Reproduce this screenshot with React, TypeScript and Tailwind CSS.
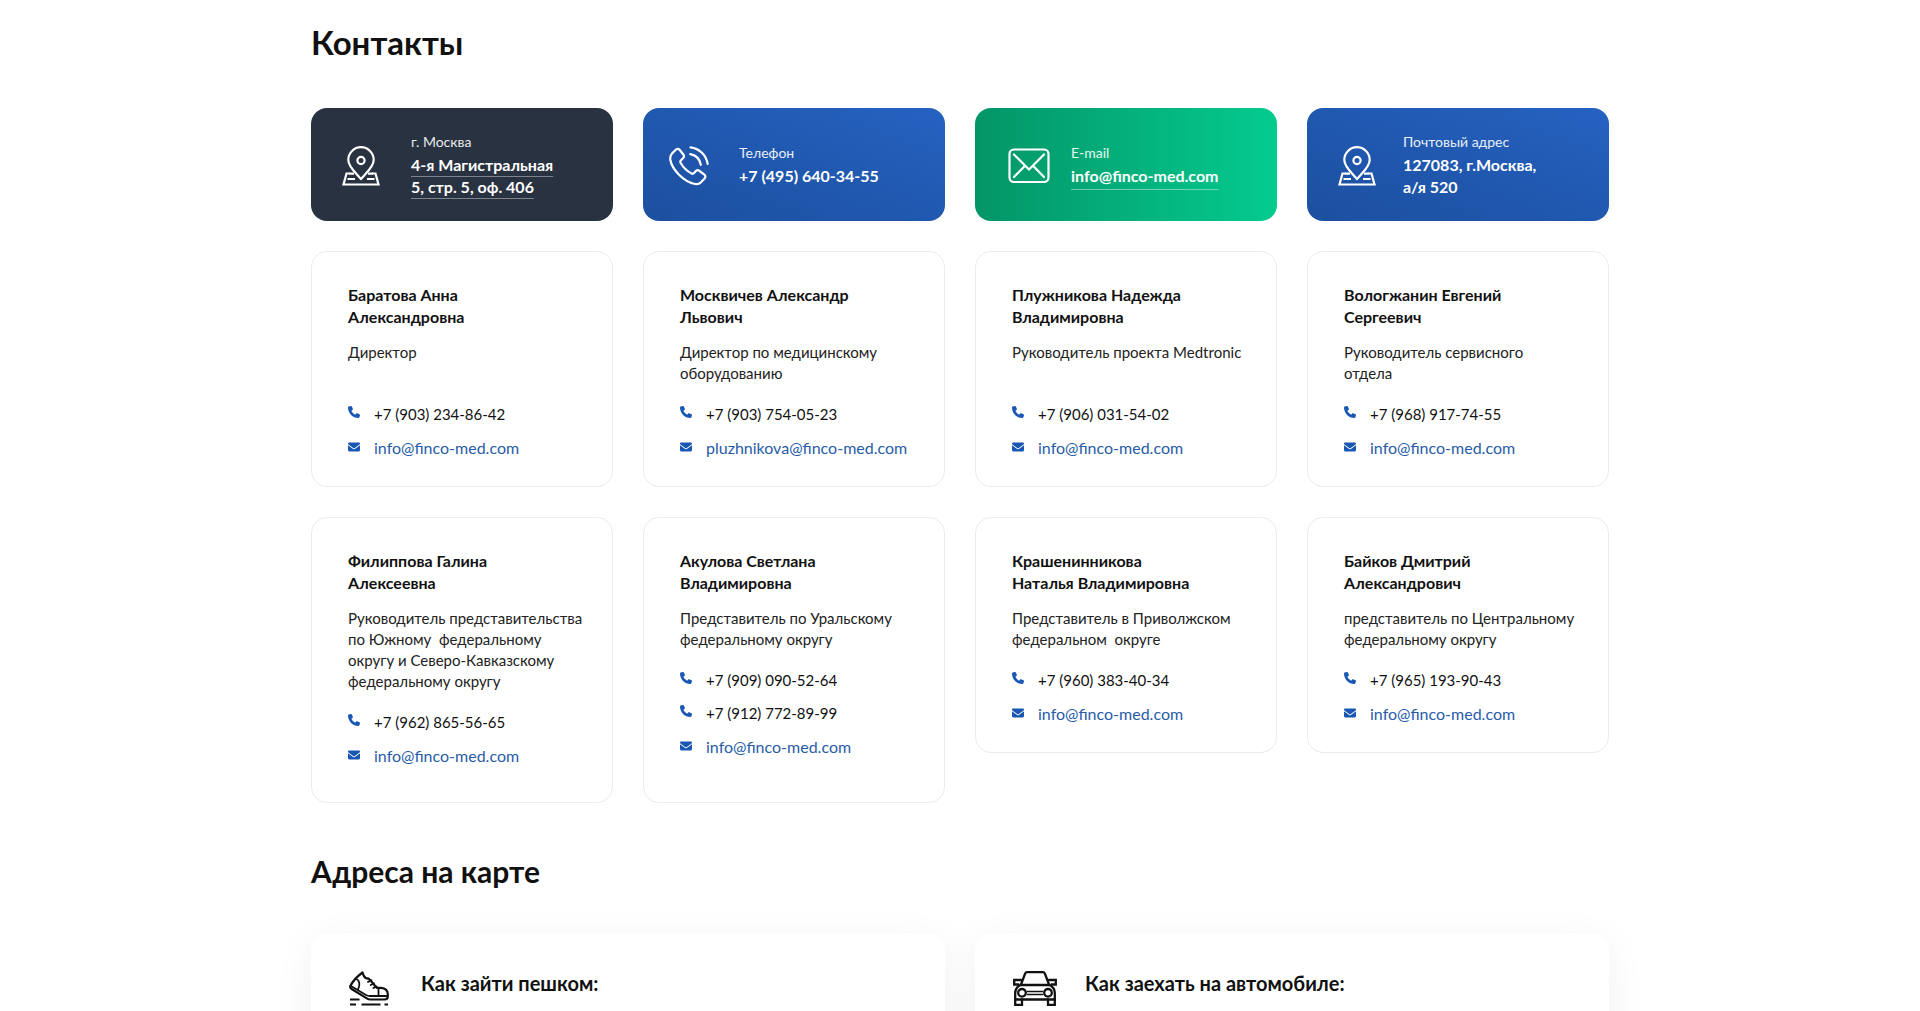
import React from "react";
import { FaPhone, FaEnvelope } from "react-icons/fa6";

type Person = {
  name: string;
  role: string;
  phones: string[];
  email: string;
  featured?: boolean;
};

const people: Person[] = [
  { name: "Баратова Анна\nАлександровна", role: "Директор", phones: ["+7 (903) 234-86-42"], email: "info@finco-med.com" },
  { name: "Москвичев Александр\nЛьвович", role: "Директор по медицинскому\nоборудованию", phones: ["+7 (903) 754-05-23"], email: "pluzhnikova@finco-med.com" },
  { name: "Плужникова Надежда\nВладимировна", role: "Руководитель проекта Medtronic", phones: ["+7 (906) 031-54-02"], email: "info@finco-med.com" },
  { name: "Вологжанин Евгений\nСергеевич", role: "Руководитель сервисного\nотдела", phones: ["+7 (968) 917-74-55"], email: "info@finco-med.com" },
  { name: "Филиппова Галина\nАлексеевна", role: "Руководитель представительства\nпо Южному  федеральному\nокругу и Северо-Кавказскому\nфедеральному округу", phones: ["+7 (962) 865-56-65"], email: "info@finco-med.com", featured: true },
  { name: "Акулова Светлана\nВладимировна", role: "Представитель по Уральскому\nфедеральному округу", phones: ["+7 (909) 090-52-64", "+7 (912) 772-89-99"], email: "info@finco-med.com", featured: true },
  { name: "Крашенинникова\nНаталья Владимировна", role: "Представитель в Приволжском\nфедеральном  округе", phones: ["+7 (960) 383-40-34"], email: "info@finco-med.com" },
  { name: "Байков Дмитрий\nАлександрович", role: "представитель по Центральному\nфедеральному округу", phones: ["+7 (965) 193-90-43"], email: "info@finco-med.com" },
];

const stroke = {
  fill: "none",
  stroke: "currentColor",
  strokeLinecap: "round" as const,
  strokeLinejoin: "round" as const,
};

function PinIcon() {
  return (
    <svg width="38" height="40" viewBox="0 0 38 40" {...stroke} strokeWidth="2.2" aria-hidden="true">
      <path d="M19 33.2C14.2 27 6.3 20.8 6.3 13.9a12.7 12.7 0 0 1 25.4 0C31.7 20.8 23.8 27 19 33.2Z" />
      <circle cx="19" cy="14.5" r="3.600" />
      <path d="M7.500 27.500H4.500L1.500 38.500H36.500L33.500 27.500H30.500" strokeLinejoin="miter" />
      <path d="M5.500 33H13M25 33H32.500M7 27.700H12M26 27.700H31" strokeLinecap="butt" />
    </svg>
  );
}

function CallIcon() {
  return (
    <svg width="40" height="40" viewBox="0 0 40 40" {...stroke} strokeWidth="2.2" aria-hidden="true">
      <path d="M3.200 7.200 6.800 3.700C8 2.600 9.500 2.600 10.600 3.800L14.300 8.500C15.300 9.800 15.200 11.200 14 12.300L12 14.200C11.200 15 11.100 15.900 11.700 17C14 21 18.300 25.200 22.400 27.400C23.400 28 24.300 27.800 25.100 27L26.800 25.100C27.900 24 29.300 24 30.500 25L35.400 28.700C36.700 29.700 36.700 31.200 35.600 32.400L32 36.200C30.500 37.800 28.500 38.400 26 38C14.800 35.800 2.800 23.500 1.300 13.500C1 11 1.600 8.800 3.200 7.200Z" />
      <path d="M21.500 1.300C30.500 2.300 37.300 9.300 38.700 18M21.200 8.200C26.800 9.200 30.800 13.300 31.800 18.800" />
    </svg>
  );
}

function MailIcon() {
  return (
    <svg width="42" height="36" viewBox="0 0 42 36" {...stroke} strokeWidth="2.2" aria-hidden="true">
      <rect x="1.500" y="1.500" width="39" height="32.500" rx="4.500" />
      <path d="M6 6.500 21 21.500 36 6.500M6 29 17 17.800M36 29 25 17.800" />
    </svg>
  );
}

function ShoeIcon() {
  return (
    <svg width="40" height="36" viewBox="0 0 40 36" {...stroke} strokeWidth="2.2" aria-hidden="true">
      <path d="M1.500 14.800C4 9.500 8.500 5.200 13.500 1.500L14.500 4.200C15.500 6.500 17.300 7.800 19.800 7.600L27.700 16.800H32C36 17.200 38.800 19.500 38.800 23.200V25.500C38.800 27.500 37.500 28.500 35.500 28.500H21.500C20 28.500 19 28.200 17.800 27.400L3 18.200C1.300 17.200.8 16.200 1.500 14.800Z" />
      <path d="M1.500 14.800 17 24C18.500 24.800 19.500 25 21 25H38.500M29.500 17V25M19 10.800 22.500 9.300M21.700 14 25 12.300M24.300 17 27.700 15.500M7 8C10.500 9 11.500 14 9 18.500" strokeWidth="1.800" />
      <path d="M1 28.500H10.500M1 33.500H7M12.500 33.500H31.500M35.500 33.500H39" strokeLinecap="butt" />
    </svg>
  );
}

function CarIcon() {
  return (
    <svg width="44" height="35" viewBox="0 0 44 35" {...stroke} strokeWidth="2.3" strokeLinejoin="miter" aria-hidden="true">
      <path d="M8 13.500 12 2.800C12.400 1.700 13 1.200 14.200 1.200H29.800C31 1.200 31.600 1.700 32 2.800L36 13.500" />
      <path d="M7.500 14H36.500C39.500 15.500 41.800 18.500 41.800 22V28.500H2.200V22C2.200 18.500 4.500 15.500 7.500 14Z" />
      <path d="M8 9H1.200V13.500H5.500M36 9H42.800V13.500H38.500" />
      <path d="M2.200 28.500V33.800H9V28.500M35 28.500V33.800H41.800V28.500" />
      <circle cx="9" cy="21.800" r="3.800" />
      <circle cx="35" cy="21.800" r="3.800" />
      <path d="M14.500 20.500H29.500M14.500 23.500H29.500" strokeWidth="1.700" />
    </svg>
  );
}

type TileProps = {
  icon: React.ReactNode;
  label: string;
  className: string;
  children: React.ReactNode;
};

function Tile({ icon, label, className, children }: TileProps) {
  return (
    <div className={`flex h-[113px] items-center rounded-2xl text-white ${className}`}>
      <div className="flex w-11 shrink-0 justify-center pt-0.5">{icon}</div>
      <div>
        <p className="text-sm leading-5 text-white/90">{label}</p>
        <div className="mt-0.5 font-bold leading-[22px] whitespace-nowrap">{children}</div>
      </div>
    </div>
  );
}

function PersonCard({ person }: { person: Person }) {
  return (
    <article
      className={`rounded-2xl border border-[#e9ebee] px-9 pt-8 pb-7 ${person.featured ? "min-h-[286px]" : ""}`}
    >
      <h3 className="font-bold leading-[22px] whitespace-pre">{person.name}</h3>
      <p className="mt-3.5 min-h-[42px] text-[15px] leading-[21px] whitespace-pre text-[#222]">{person.role}</p>
      <ul className="mt-5 space-y-3 text-[15px] leading-[21px]">
        {person.phones.map((phone) => (
          <li key={phone} className="flex gap-3.5">
            <FaPhone className="mt-0.5 size-3 text-[#1a56b4]" aria-hidden="true" />
            <span>{phone}</span>
          </li>
        ))}
        <li className="flex gap-3.5">
          <FaEnvelope className="mt-1 size-3 text-[#1a56b4]" aria-hidden="true" />
          <a href={`mailto:${person.email}`} className="text-base leading-[21px] text-[#285ca9]">
            {person.email}
          </a>
        </li>
      </ul>
    </article>
  );
}

function RouteCard({ icon, title }: { icon: React.ReactNode; title: string }) {
  return (
    <article className="flex gap-7 rounded-2xl bg-white px-[38px] pt-9 pb-12 shadow-[0_10px_40px_rgba(0,0,0,0.06)]">
      <div className="w-11 shrink-0 pt-0.5">{icon}</div>
      <h3 className="text-xl leading-7 font-bold">{title}</h3>
    </article>
  );
}

export default function App() {
  return (
    <main className="overflow-hidden bg-white px-6 pb-10 font-['Lato',sans-serif] text-base text-[#111]">
      <div className="mx-auto max-w-[1298px]">
        <h1 className="pt-5 text-[33px] leading-[44px] font-bold">Контакты</h1>

        <section className="mt-11 grid grid-cols-1 gap-[30px] md:grid-cols-2 xl:grid-cols-4">
          <Tile icon={<PinIcon />} label="г. Москва" className="gap-7 bg-[#293241] pl-7">
            <a href="#map" className="underline decoration-white/40 decoration-1 underline-offset-[5px]">
              4-я Магистральная
              <br />
              5, стр. 5, оф. 406
            </a>
          </Tile>
          <Tile icon={<CallIcon />} label="Телефон" className="gap-7 bg-linear-to-tr from-[#1c4f9f] to-[#2562c1] pl-6">
            +7 (495) 640-34-55
          </Tile>
          <Tile icon={<MailIcon />} label="E-mail" className="gap-5 bg-linear-to-r from-[#049567] to-[#04cb8f] pl-8">
            <a
              href="mailto:info@finco-med.com"
              className="underline decoration-white/40 decoration-1 underline-offset-[7px]"
            >
              info@finco-med.com
            </a>
          </Tile>
          <Tile icon={<PinIcon />} label="Почтовый адрес" className="gap-6 bg-linear-to-tr from-[#1c4f9f] to-[#2562c1] pl-7">
            127083, г.Москва,
            <br />
            а/я 520
          </Tile>
        </section>

        <section className="mt-[30px] grid grid-cols-1 items-start gap-[30px] md:grid-cols-2 xl:grid-cols-4">
          {people.map((person) => (
            <PersonCard key={person.name} person={person} />
          ))}
        </section>

        <h2 id="map" className="mt-[50px] text-3xl leading-9 font-bold">
          Адреса на карте
        </h2>

        <section className="mt-11 grid grid-cols-1 gap-[30px] md:grid-cols-2">
          <RouteCard icon={<ShoeIcon />} title="Как зайти пешком:" />
          <RouteCard icon={<CarIcon />} title="Как заехать на автомобиле:" />
        </section>
      </div>
    </main>
  );
}
